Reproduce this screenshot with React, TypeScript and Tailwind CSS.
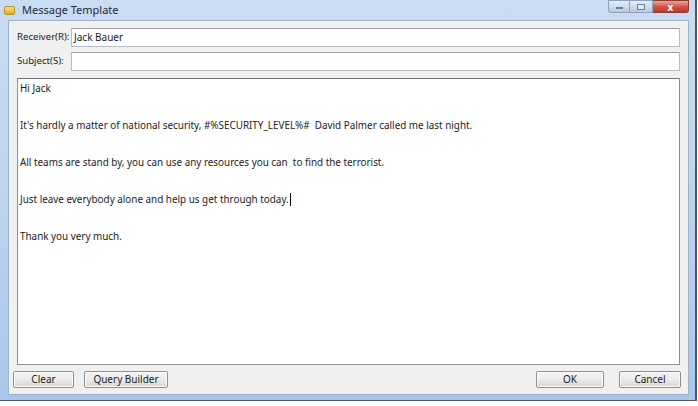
import React from "react";

const font = { fontFamily: '"Noto Sans", "Open Sans", sans-serif' };

function Btn({ label, w }: { label: string; w: string }) {
  return (
    <div
      className={`${w} h-[17px] flex items-center justify-center rounded-[2px] border border-[#8e8f8f] bg-gradient-to-b from-[#f4f4f4] via-[#ebebeb] to-[#d6d6d6] text-[10px] text-[#1b1b1b] shadow-[inset_0_0_0_1px_#fbfbfb]`}
    >
      {label}
    </div>
  );
}

export default function App() {
  return (
    <div className="w-[698px] h-[406px] bg-white overflow-hidden" style={font}>
      <div className="w-[697px] h-[401px] flex flex-col border-r-2 border-b border-[#4b5563] bg-gradient-to-b from-[#c9dcf1] via-[#bed4ee] to-[#a9c6ea]">
        {/* Title bar */}
        <div className="h-[20px] flex items-center relative">
          <div className="ml-[4px] w-[11px] h-[9px] rounded-[2px] bg-gradient-to-b from-[#f6e27a] to-[#d9b12f] border border-[#b8922a]" />
          <div className="ml-[7px] text-[11px] text-[#1e2a3a]">Message Template</div>
          <div className="absolute right-[6px] top-0 flex h-[13px]">
            <div className="w-[22px] h-full rounded-bl-[3px] border border-[#8ba0bb] bg-gradient-to-b from-[#e3ecf7] to-[#b8cbe3] flex items-end justify-center pb-[3px]">
              <div className="w-[7px] h-[2px] bg-white border border-[#6b7d95]" />
            </div>
            <div className="w-[23px] h-full border-y border-r border-[#8ba0bb] bg-gradient-to-b from-[#e3ecf7] to-[#b8cbe3] flex items-center justify-center">
              <div className="w-[8px] h-[6px] border border-[#6b7d95] bg-[#dfe8f3]" />
            </div>
            <div className="w-[36px] h-full rounded-br-[3px] border-y border-r border-[#8a3a32] bg-gradient-to-b from-[#e7a497] via-[#d2544a] to-[#c0392b] flex items-center justify-center text-white text-[10px] font-bold leading-none">
              x
            </div>
          </div>
        </div>
        {/* Client area */}
        <div className="ml-[8px] mr-[6px] mb-[5px] flex-1 flex flex-col bg-[#f0f0f0] border border-[#9fb2c9] px-[8px] pt-[7px] text-[10px] text-[#1b1b1b]">
          <div className="flex items-center h-[19px]">
            <div className="w-[54px] shrink-0 text-[9.6px]">Receiver(R):</div>
            <div className="flex-1 h-full bg-white border border-[#b8bcc4] border-t-[#9a9ea6] flex items-center pl-[2px]">
              Jack Bauer
            </div>
          </div>
          <div className="flex items-center h-[19px] mt-[5px]">
            <div className="w-[54px] shrink-0 text-[9.6px]">Subject(S):</div>
            <div className="flex-1 h-full bg-white border border-[#b8bcc4] border-t-[#9a9ea6]" />
          </div>
          <div className="mt-[7px] h-[287px] bg-white border border-[#8c8f94] border-t-[#6e7176] pl-[2px] pt-0 leading-[18.5px] text-[9.9px] text-[#221a1c]">
            <div>Hi Jack</div>
            <div>&nbsp;</div>
            <div>It's hardly a matter of national security, #%SECURITY_LEVEL%#&nbsp; David Palmer called me last night.</div>
            <div>&nbsp;</div>
            <div>All teams are stand by, you can use any resources you can&nbsp; to find the terrorist.</div>
            <div>&nbsp;</div>
            <div className="flex items-center">
              Just leave everybody alone and help us get through today.
              <span className="inline-block w-[1px] h-[13px] bg-black ml-[1px]" />
            </div>
            <div>&nbsp;</div>
            <div>Thank you very much.</div>
          </div>
          <div className="flex items-center mt-[6px] -ml-[4px] -mr-[1px]">
            <Btn label="Clear" w="w-[61px]" />
            <div className="w-[10px]" />
            <Btn label="Query Builder" w="w-[84px]" />
            <div className="flex-1" />
            <Btn label="OK" w="w-[68px]" />
            <div className="w-[15px]" />
            <Btn label="Cancel" w="w-[62px]" />
          </div>
        </div>
      </div>
    </div>
  );
}
